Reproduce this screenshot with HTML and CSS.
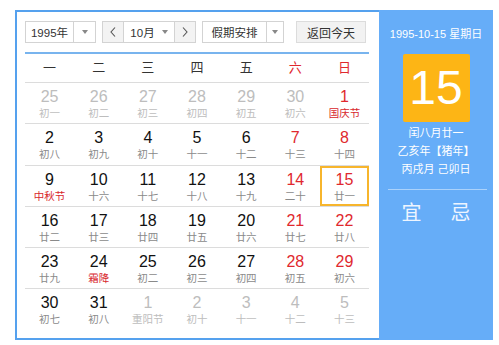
FILE: index.html
```html
<!DOCTYPE html>
<html lang="zh-CN">
<head>
    <meta charset="UTF-8">
    <meta name="viewport" content="width=device-width, initial-scale=1.0">
    <title>万年历</title>
    <link rel="stylesheet" href="styles.css">
</head>
<body>
    <div class="calendar">
        <div class="main">
            <div class="toolbar">
                <div class="select year">
                    <span class="select-text">1995年</span>
                    <span class="select-arrow"><i class="caret"></i></span>
                </div>
                <div class="month-picker">
                    <span class="nav">
                        <svg width="6" height="10" viewBox="0 0 6 10"><polyline points="5,0.5 1,5 5,9.5" fill="none" stroke="#555" stroke-width="1.1"/></svg>
                    </span>
                    <span class="month-text">10月<i class="caret"></i></span>
                    <span class="nav">
                        <svg width="6" height="10" viewBox="0 0 6 10"><polyline points="1,0.5 5,5 1,9.5" fill="none" stroke="#555" stroke-width="1.1"/></svg>
                    </span>
                </div>
                <div class="select holiday">
                    <span class="select-text">假期安排</span>
                    <span class="select-arrow"><i class="caret"></i></span>
                </div>
                <button class="today-btn">返回今天</button>
            </div>
            <div class="weekdays">
                <span>一</span><span>二</span><span>三</span><span>四</span><span>五</span>
                <span class="red">六</span><span class="red">日</span>
            </div>
            <div class="days" id="days"></div>
        </div>
        <div class="panel">
            <div class="panel-date">1995-10-15 星期日</div>
            <div class="big-day">15</div>
            <div class="lunar-info">
                <div>闰八月廿一</div>
                <div>乙亥年【猪年】</div>
                <div>丙戌月 己卯日</div>
            </div>
            <div class="panel-line"></div>
            <div class="yiji">
                <span>宜</span>
                <span>忌</span>
            </div>
        </div>
    </div>
    <script>
        // [day, lunar, flags]  o = other month, f = festival, s = selected
        const weeks = [
            [[25, '初一', 'o'], [26, '初二', 'o'], [27, '初三', 'o'], [28, '初四', 'o'], [29, '初五', 'o'], [30, '初六', 'o'], [1, '国庆节', 'f']],
            [[2, '初八'], [3, '初九'], [4, '初十'], [5, '十一'], [6, '十二'], [7, '十三'], [8, '十四']],
            [[9, '中秋节', 'f'], [10, '十六'], [11, '十七'], [12, '十八'], [13, '十九'], [14, '二十'], [15, '廿一', 's']],
            [[16, '廿二'], [17, '廿三'], [18, '廿四'], [19, '廿五'], [20, '廿六'], [21, '廿七'], [22, '廿八']],
            [[23, '廿九'], [24, '霜降', 'f'], [25, '初二'], [26, '初三'], [27, '初四'], [28, '初五'], [29, '初六']],
            [[30, '初七'], [31, '初八'], [1, '重阳节', 'o'], [2, '初十', 'o'], [3, '十一', 'o'], [4, '十二', 'o'], [5, '十三', 'o']]
        ];

        const daysEl = document.getElementById('days');

        weeks.forEach(week => {
            const row = document.createElement('div');
            row.className = 'week';
            week.forEach(([num, lunar, flags = ''], i) => {
                const cell = document.createElement('div');
                cell.className = 'day';
                if (flags.includes('o')) cell.classList.add('other');
                if (flags.includes('s')) cell.classList.add('selected');
                if (i >= 5) cell.classList.add('weekend');
                const n = document.createElement('div');
                n.className = 'num';
                n.textContent = num;
                const l = document.createElement('div');
                l.className = 'lunar';
                if (flags.includes('f')) l.classList.add('festival');
                l.textContent = lunar;
                cell.appendChild(n);
                cell.appendChild(l);
                row.appendChild(cell);
            });
            daysEl.appendChild(row);
        });
    </script>
</body>
</html>
```

FILE: styles.css
```css
body {
    margin: 0;
    background: #fff;
    font-family: "Liberation Sans", "Noto Sans CJK SC", sans-serif;
    color: #222;
}
.calendar {
    display: flex;
    width: 478px;
    height: 330px;
    margin: 10px 0 0 15px;
    border: 2px solid #55a1ee;
    box-sizing: border-box;
}
.main {
    width: 362px;
    padding: 9px 10px 0 8px;
    box-sizing: border-box;
}
.toolbar {
    display: flex;
    height: 22px;
    font-size: 11.5px;
    color: #333;
}
.select,
.month-picker {
    display: flex;
    border: 1px solid #d3d3d3;
    box-sizing: border-box;
    background: #fff;
}
.select-text {
    display: flex;
    align-items: center;
    justify-content: center;
    border-right: 1px solid #d3d3d3;
}
.select-arrow {
    display: flex;
    align-items: center;
    justify-content: center;
    flex: 1;
}
.caret {
    display: inline-block;
    width: 0;
    height: 0;
    border-left: 3px solid transparent;
    border-right: 3px solid transparent;
    border-top: 4px solid #888;
}
.year {
    width: 71px;
}
.year .select-text {
    width: 47px;
}
.month-picker {
    width: 94px;
    margin-left: 6px;
}
.nav {
    display: flex;
    align-items: center;
    justify-content: center;
    width: 20px;
    background: #f3f3f3;
}
.month-text {
    display: flex;
    align-items: center;
    justify-content: center;
    gap: 7px;
    flex: 1;
    border-left: 1px solid #d3d3d3;
    border-right: 1px solid #d3d3d3;
}
.holiday {
    width: 82px;
    margin-left: 6px;
}
.holiday .select-text {
    width: 63px;
}
.today-btn {
    width: 70px;
    height: 22px;
    margin-left: 12px;
    padding: 0;
    border: 1px solid #dcdcdc;
    background: #f2f2f2;
    font-family: inherit;
    font-size: 12px;
    color: #333;
}
.weekdays {
    display: grid;
    grid-template-columns: repeat(7, 1fr);
    height: 31px;
    margin-top: 9px;
    border-top: 2px solid #78b4ee;
    border-bottom: 1px solid #dcdcdc;
    box-sizing: border-box;
    line-height: 28px;
    text-align: center;
    font-size: 13px;
    color: #333;
}
.red {
    color: #e0282e;
}
.week {
    display: grid;
    grid-template-columns: repeat(7, 1fr);
    height: 41.3px;
    border-bottom: 1px solid #dcdcdc;
    box-sizing: border-box;
}
.week:last-child {
    border-bottom: none;
}
.day {
    padding-top: 4px;
    text-align: center;
    box-sizing: border-box;
}
.num {
    height: 19px;
    line-height: 19px;
    font-size: 16px;
    color: #111;
}
.lunar {
    height: 14px;
    line-height: 14px;
    font-size: 10.5px;
    color: #8a8a8a;
}
.weekend .num {
    color: #e0282e;
}
.festival {
    color: #d8262c;
}
.other .num,
.other .lunar {
    color: #bdbdbd;
}
.selected {
    padding-top: 2px;
    border: 2px solid #f7b52c;
}
.panel {
    flex: 1;
    margin: -2px -2px -2px 0;
    padding-top: 16px;
    background: #66adf8;
    color: #fff;
    text-align: center;
}
.panel-date {
    height: 16px;
    line-height: 16px;
    font-size: 11px;
}
.big-day {
    width: 67px;
    height: 68px;
    margin: 12px auto 0;
    background: #fdb515;
    border-radius: 2px;
    line-height: 68px;
    font-size: 48px;
}
.lunar-info {
    margin-top: 2px;
    font-size: 11px;
    line-height: 18px;
}
.panel-line {
    height: 1px;
    margin: 11px 6px 0 9px;
    background: rgba(255, 255, 255, 0.45);
}
.yiji {
    display: flex;
    justify-content: center;
    gap: 29px;
    margin-top: 11px;
    font-size: 20px;
    line-height: 24px;
    color: #eef5ff;
}
```
